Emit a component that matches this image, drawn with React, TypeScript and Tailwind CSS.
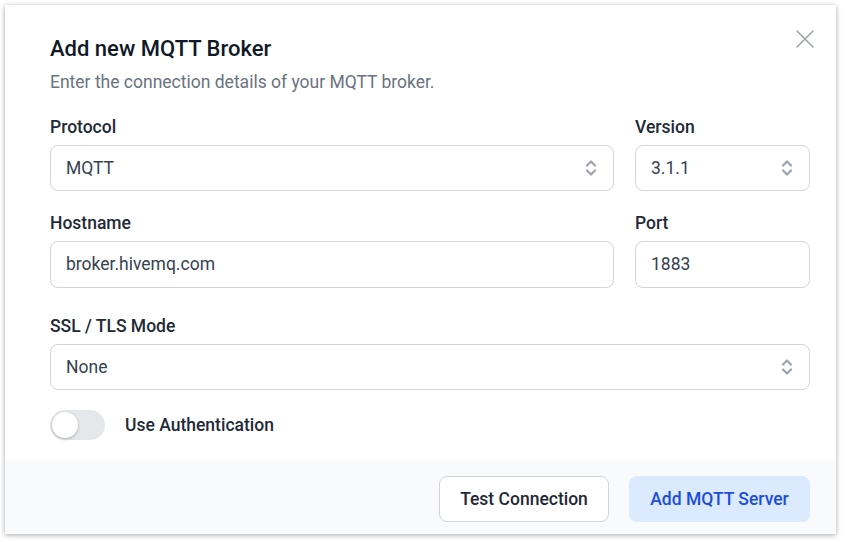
import React from "react";

function Chevrons() {
  return (
    <svg width="14" height="20" viewBox="0 0 14 20" fill="none" stroke="#9ca3af" strokeWidth="2.2" strokeLinecap="round" strokeLinejoin="round">
      <path d="M3 7.5 L7 3.5 L11 7.5" />
      <path d="M3 12.5 L7 16.5 L11 12.5" />
    </svg>
  );
}

function SelectBox({ value, className }: { value: string; className: string }) {
  return (
    <div className={"h-[46px] rounded-lg border border-[#d1d5db] bg-white flex items-center justify-between pl-[15px] pr-[15px] text-[17.5px] text-[#374151] " + className}>
      <span>{value}</span>
      <Chevrons />
    </div>
  );
}

function InputBox({ value, className }: { value: string; className: string }) {
  return (
    <div className={"h-[47px] rounded-lg border border-[#d1d5db] bg-white flex items-center pl-[15px] text-[17.5px] text-[#374151] " + className}>
      <span>{value}</span>
    </div>
  );
}

export default function App() {
  return (
    <div className="w-[845px] h-[542px] bg-white pt-[5px] pl-[5px]" style={{ fontFamily: "Roboto, 'Liberation Sans', sans-serif" }}>
      <div className="relative w-[831px] h-[529px] bg-white shadow-[0_1px_5px_rgba(0,0,0,0.35)] flex flex-col">
        <button className="absolute right-[19px] top-[22px] text-[#9ca3af]">
          <svg width="24" height="24" viewBox="0 0 24 24" fill="none" stroke="currentColor" strokeWidth="1.6" strokeLinecap="round">
            <path d="M4 4 L20 20 M20 4 L4 20" />
          </svg>
        </button>
        <div className="pl-[45px] pr-[26px] pt-[30px] flex-1">
          <h2 className="text-[22px] leading-[28px] font-medium text-[#111827]">Add new MQTT Broker</h2>
          <p className="mt-[7px] text-[17.5px] leading-[24px] text-[#6b7280]">Enter the connection details of your MQTT broker.</p>
          <div className="mt-[21px] flex gap-[21px]">
            <div className="flex-1">
              <div className="text-[17.5px] leading-[24px] font-medium text-[#1f2937]">Protocol</div>
              <SelectBox value="MQTT" className="mt-[6px] w-full" />
            </div>
            <div className="w-[175px]">
              <div className="text-[17.5px] leading-[24px] font-medium text-[#1f2937]">Version</div>
              <SelectBox value="3.1.1" className="mt-[6px] w-full" />
            </div>
          </div>
          <div className="mt-[20px] flex gap-[21px]">
            <div className="flex-1">
              <div className="text-[17.5px] leading-[24px] font-medium text-[#1f2937]">Hostname</div>
              <InputBox value="broker.hivemq.com" className="mt-[6px] w-full" />
            </div>
            <div className="w-[175px]">
              <div className="text-[17.5px] leading-[24px] font-medium text-[#1f2937]">Port</div>
              <InputBox value="1883" className="mt-[6px] w-full" />
            </div>
          </div>
          <div className="mt-[26px]">
            <div className="text-[17.5px] leading-[24px] font-medium text-[#1f2937]">SSL / TLS Mode</div>
            <SelectBox value="None" className="mt-[6px] w-full" />
          </div>
          <div className="mt-[20px] flex items-center gap-[20px]">
            <div className="w-[55px] h-[30px] rounded-full bg-[#e5e7eb] p-[2px] flex items-center">
              <div className="w-[26px] h-[26px] rounded-full bg-white shadow-[0_1px_3px_rgba(0,0,0,0.25)]" />
            </div>
            <span className="text-[17.5px] font-medium text-[#1f2937]">Use Authentication</span>
          </div>
        </div>
        <div className="h-[74px] bg-[#f9fafb] flex justify-end items-start gap-[20px] pt-[16px] pr-[26px]">
          <button className="h-[46px] w-[170px] rounded-lg border border-[#d1d5db] bg-white text-[17.5px] font-medium text-[#1f2937]">Test Connection</button>
          <button className="h-[46px] w-[181px] rounded-lg bg-[#dbeafe] text-[17.5px] font-medium text-[#1d4ed8]">Add MQTT Server</button>
        </div>
      </div>
    </div>
  );
}
